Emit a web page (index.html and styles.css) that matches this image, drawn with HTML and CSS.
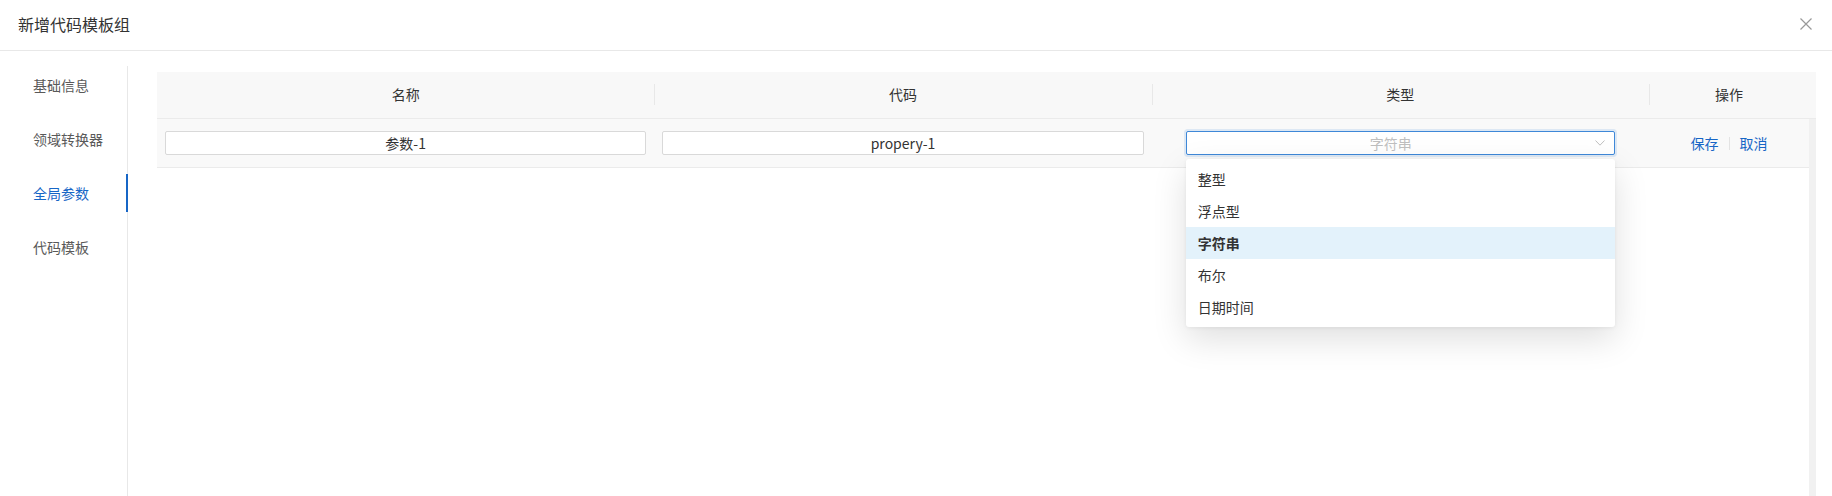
FILE: index.html
```html
<!DOCTYPE html>
<html lang="zh-CN">
<head>
<meta charset="utf-8">
<title>新增代码模板组</title>
<link rel="stylesheet" href="styles.css">
</head>
<body>
<div class="modal">
  <div class="modal-header">
    <div class="modal-title">新增代码模板组</div>
    <svg class="close" width="12" height="12" viewBox="0 0 12 12"><path d="M0.5 0.5 L11.5 11.5 M11.5 0.5 L0.5 11.5" stroke="#999" stroke-width="1.2" fill="none"/></svg>
  </div>
  <div class="modal-body">
    <div class="sidebar">
      <div class="nav-item">基础信息</div>
      <div class="nav-item">领域转换器</div>
      <div class="nav-item active">全局参数</div>
      <div class="nav-item">代码模板</div>
    </div>
    <div class="main">
      <div class="table">
        <div class="thead">
          <div class="th">名称</div>
          <div class="th sep">代码</div>
          <div class="th sep">类型</div>
          <div class="th sep">操作</div>
          <div class="th gutter-head"></div>
        </div>
        <div class="tbody">
          <div class="tbody-content">
            <div class="tr">
              <div class="td"><div class="input">参数-1</div></div>
              <div class="td"><div class="input">propery-1</div></div>
              <div class="td select-cell">
                <div class="select-wrap">
                  <div class="select">
                    <span class="select-text">字符串</span>
                    <svg class="arrow" width="10" height="6" viewBox="0 0 10 6"><path d="M0.5 0.5 L5 5.2 L9.5 0.5" stroke="#bfbfbf" stroke-width="1" fill="none"/></svg>
                  </div>
                  <div class="dropdown">
                    <div class="option">整型</div>
                    <div class="option">浮点型</div>
                    <div class="option selected">字符串</div>
                    <div class="option">布尔</div>
                    <div class="option">日期时间</div>
                  </div>
                </div>
              </div>
              <div class="td actions">
                <span class="link">保存</span>
                <span class="divider"></span>
                <span class="link">取消</span>
              </div>
            </div>
          </div>
          <div class="gutter"></div>
        </div>
      </div>
    </div>
  </div>
</div>
</body>
</html>
```

FILE: styles.css
```css
* { box-sizing: border-box; }
html, body { margin: 0; padding: 0; background: #fff; }
body {
  font-family: "Noto Sans CJK SC", "Noto Sans", sans-serif;
  font-size: 14px;
  color: #333;
  height: 496px;
  overflow: hidden;
}
.modal { display: flex; flex-direction: column; height: 496px; }
.modal-header {
  height: 51px;
  border-bottom: 1px solid #e8e8e8;
  display: flex;
  align-items: center;
  justify-content: space-between;
  padding: 0 20px 0 18px;
  flex: none;
}
.modal-title { font-size: 16px; color: #333; line-height: 22px; padding-bottom: 2px; }
.close { display: block; margin-top: -3px; }
.modal-body { flex: 1; display: flex; padding-top: 15px; min-height: 0; }
.sidebar {
  width: 128px;
  border-right: 1px solid #e8e8e8;
  flex: none;
}
.nav-item {
  height: 38px;
  line-height: 38px;
  margin-bottom: 16px;
  padding-left: 33px;
  padding-bottom: 1px;
  color: #595959;
  margin-right: -1px;
  border-right: 2px solid transparent;
}
.nav-item.active { color: #1766c6; border-right-color: #1766c6; }
.main { flex: 1; padding: 6px 16px 0 29px; display: flex; flex-direction: column; min-width: 0; }
.table { flex: 1; display: flex; flex-direction: column; }
.thead {
  display: grid;
  grid-template-columns: 1fr 1fr 1fr 160px 7px;
  background: #f8f8f8;
  border-bottom: 1px solid #ebebeb;
  height: 47px;
  flex: none;
}
.th {
  position: relative;
  display: flex;
  align-items: center;
  justify-content: center;
  color: #333;
  line-height: 20px;
  padding-bottom: 2px;
}
.th.sep::before {
  content: "";
  position: absolute;
  left: 0;
  top: 12px;
  height: 21px;
  width: 1px;
  background: #e8e8e8;
}
.tbody { flex: 1; display: flex; }
.tbody-content { flex: 1; }
.gutter { width: 7px; background: #f1f1f1; flex: none; }
.tr {
  display: grid;
  grid-template-columns: 1fr 1fr 1fr 160px;
  height: 49px;
  background: #f9f9f9;
  border-bottom: 1px solid #ebebeb;
}
.td { display: flex; align-items: center; padding: 0 8px; }
.input {
  width: 100%;
  height: 24px;
  border: 1px solid #d9d9d9;
  background: #fff;
  text-align: center;
  line-height: 22px;
  color: #333;
  border-radius: 2px;
}
.select-cell { padding: 0 34px 0 34px; }
.select-wrap { position: relative; width: 100%; }
.select {
  height: 24px;
  width: 100%;
  border: 1px solid #3f88d8;
  border-radius: 2px;
  background: #fff;
  box-shadow: 0 0 0 2px rgba(63, 136, 216, 0.15);
  display: flex;
  align-items: center;
  padding: 0 9px 0 10px;
}
.select-text { flex: 1; text-align: center; color: #bfbfbf; line-height: 22px; margin-right: 10px; }
.arrow { display: block; flex: none; }
.dropdown {
  position: absolute;
  left: 0;
  right: 0;
  top: 28px;
  background: #fff;
  border-radius: 3px;
  padding: 4px 0;
  box-shadow: 0 12px 34px rgba(0, 0, 0, 0.13), 0 1px 4px rgba(0, 0, 0, 0.06);
  z-index: 10;
}
.option {
  height: 32px;
  line-height: 32px;
  padding: 0 12px;
  color: #333;
}
.option.selected { background: #e3f2fb; font-weight: bold; }
.actions { justify-content: center; gap: 10px; }
.link { color: #1766c6; line-height: 20px; }
.divider { width: 1px; height: 13px; background: #e3e3e3; }
```
